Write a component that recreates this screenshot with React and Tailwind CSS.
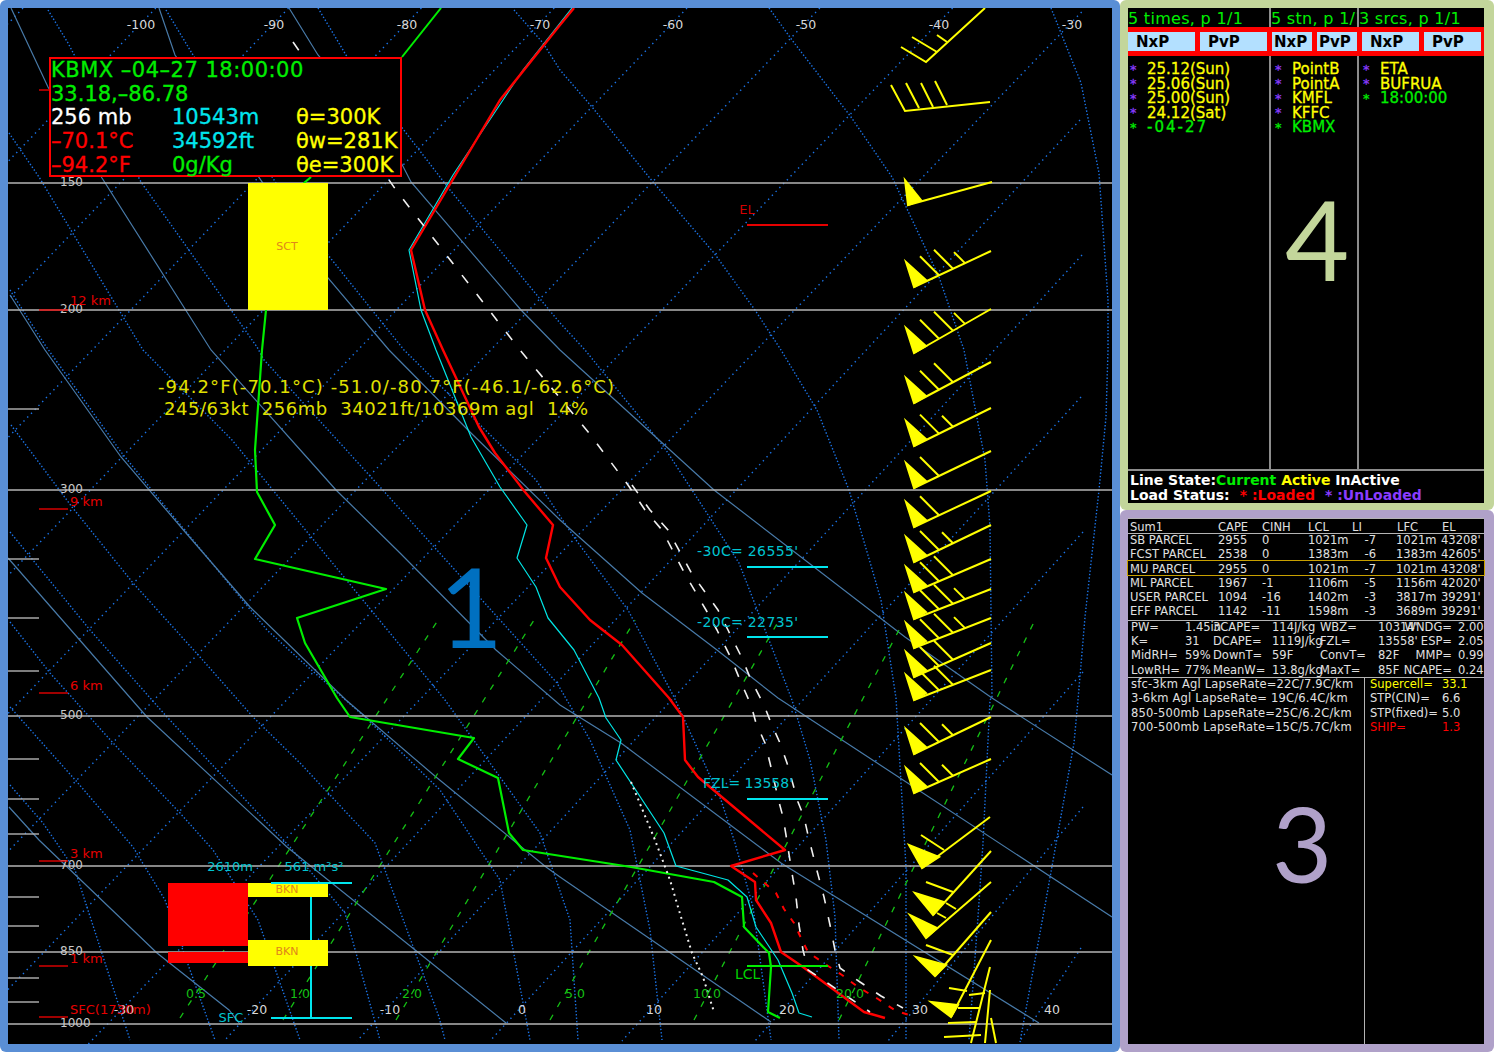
import React from 'react';

const pts = (arr) => arr.map((p) => p.join(',')).join(' ');

// page coordinates, the svg viewBox starts at the panel's inner corner
const isobars = [
  [183, '150'], [310, '200'], [490, '300'], [716, '500'], [866, '700'], [952, '850'], [1024, '1000'],
];
const minorTicks = [409, 559, 618, 671, 759, 799, 834, 897, 926, 978, 1002];

const dryAdiabats = [
  [[11,8],[48,87],[102,178],[211,350],[303,453],[336,490],[400,553],[496,650],[560,705],[621,743],[781,863],[1039,1023]],
  [[159,8],[175,55],[328,278],[389,350],[471,433],[560,520],[642,593],[717,650],[778,698],[1112,917]],
  [[289,8],[318,55],[388,137],[411,182],[521,310],[560,350],[714,490],[905,637],[992,698],[1112,775]],
  [[10,295],[45,350],[121,457],[186,533],[250,607],[346,700],[436,777],[546,867],[560,877],[771,1022]],
  [[8,558],[147,717],[287,847],[506,1023]],
  [[9,807],[39,840],[157,953],[229,1010],[240,1024]],
];

const moistAdiabats = [
  [[1051,8],[1081,83],[1099,173],[1108,300],[1108,350],[1106,417],[1099,490],[1085,617],[1078,700],[1074,743],[1046,900],[1020,1042]],
  [[769,8],[792,40],[851,117],[892,177],[939,277],[964,350],[985,460],[990,527],[992,697],[990,700],[983,843],[978,917],[969,1040]],
  [[514,10],[543,43],[560,70],[592,107],[653,182],[714,253],[755,310],[781,350],[817,410],[849,490],[881,600],[896,698],[906,867],[906,1040]],
  [[318,8],[346,55],[450,190],[560,323],[585,350],[664,447],[692,490],[739,563],[774,653],[792,700],[810,760],[826,840],[835,917],[839,1040]],
  [[166,10],[193,55],[300,220],[404,350],[536,480],[576,540],[628,610],[674,697],[721,800],[735,843],[753,907],[771,1040]],
  [[48,10],[68,43],[141,182],[257,347],[264,360],[371,477],[482,600],[557,683],[590,740],[630,830],[650,930],[662,1040]],
  [[9,133],[39,177],[143,350],[232,440],[330,560],[445,700],[540,833],[570,920],[578,1040]],
  [[10,290],[45,345],[121,452],[160,500],[267,630],[300,660],[365,717],[440,790],[500,880],[530,1040]],
  [[11,425],[72,507],[133,583],[200,657],[253,717],[300,763],[375,843],[439,1017],[445,1040]],
  [[10,532],[90,630],[167,717],[290,847],[345,913],[380,1040]],
  [[10,622],[50,673],[113,743],[180,813],[213,850],[258,920],[300,1040]],
  [[10,707],[77,782],[133,847],[165,900],[215,1040]],
  [[10,785],[43,823],[75,870],[130,1040]],
];

const mixingLines = [
  [[180,1018],[440,617]],
  [[283,1020],[534,620]],
  [[396,1020],[635,620]],
  [[550,1020],[778,622]],
  [[694,1020],[899,630]],
  [[839,1020],[1035,620]],
];

const temperature = [[574,8],[560,25],[500,100],[411,250],[425,310],[443,350],[479,427],[495,453],[525,492],[553,525],[546,558],[560,587],[590,620],[622,645],[669,698],[683,717],[685,760],[698,777],[785,850],[731,866],[755,882],[756,900],[771,923],[781,952],[803,967],[864,1012],[885,1018]];
const wetBulb = [[572,8],[523,70],[453,175],[409,250],[421,310],[436,350],[471,437],[500,487],[527,525],[517,558],[536,587],[548,618],[574,650],[599,698],[606,718],[621,740],[616,760],[664,833],[676,866],[728,880],[747,897],[756,927],[778,960],[792,993],[799,1013],[812,1017]];
const dewpointTop = [[441,8],[402,57]];
const dewpoint = [[311,177],[304,183],[266,310],[262,350],[255,450],[257,492],[275,525],[255,559],[386,589],[297,618],[305,643],[337,698],[350,717],[474,738],[458,759],[498,778],[509,833],[523,850],[631,867],[714,882],[742,897],[744,927],[769,953],[771,967],[768,1012],[780,1018]];

const parcelLeft = [[293,42],[396,190],[520,350],[589,433],[628,485],[645,510],[662,530],[685,574],[706,610],[717,630],[731,658],[740,680],[751,705],[756,723],[765,743],[770,763],[779,802],[783,817],[786,835],[791,867],[796,897],[799,925],[803,950],[808,970],[826,982],[870,1012]];
const parcelRight = [[632,485],[650,510],[668,530],[692,574],[718,610],[728,630],[742,658],[751,680],[764,705],[771,723],[780,743],[787,763],[798,802],[804,817],[808,835],[816,867],[824,897],[830,925],[835,950],[840,968],[860,982],[881,996],[903,1008]];
const parcelDotted = [[631,782],[655,840],[670,880],[681,917],[692,953],[703,977],[714,1012]];
const parcelRed = [[753,873],[776,893],[784,909],[794,923],[801,938],[808,952],[822,962],[842,975],[858,987],[878,999],[896,1011],[913,1016]];

// head y, tail y, feathers (f = full, s = short)
const stdBarbs = [
  [287,251,'ffs'], [353,309,'ffs'], [403,362,'ff'], [446,408,'fs'], [488,451,'f'], [527,491,'f'],
  [562,525,'fs'], [592,559,'ff'], [619,589,'ffs'], [648,618,'ffs'], [677,643,'ff'], [700,670,'ff'],
  [754,717,'fs'], [793,759,'fs'],
];

const barbLines = [
  [[985,8],[926,62],[901,47]], [[937,52],[912,37]], [[947,42],[937,35]],
  [[990,102],[905,111],[891,85]], [[919,108],[906,83]], [[933,107],[921,83]], [[947,105],[935,81]],
  [[992,182],[908,205]],
  [[990,817],[922,868]], [[944,850],[921,835]],
  [[991,851],[933,915]], [[953,892],[926,882]], [[956,909],[946,903]],
  [[991,882],[926,938]], [[946,918],[937,913]],
  [[991,912],[935,976]], [[953,955],[926,945]],
  [[991,940],[951,1017]], [[949,988],[967,991]],
  [[990,967],[971,1043]], [[985,993],[969,995]], [[980,1008],[958,1008]], [[976,1022],[948,1023]], [[981,1035],[944,1037]],
  [[990,990],[985,1043]], [[991,1018],[996,1043]],
];
const barbTris = [
  [[905,180],[908,205],[921,200]],
  [[909,845],[922,868],[939,857]],
  [[915,893],[933,915],[944,902]],
  [[910,915],[926,938],[937,928]],
  [[916,957],[935,976],[946,965]],
  [[931,1002],[951,1017],[958,1005]],
];

const topTemps = [[141,'-100'],[274,'-90'],[407,'-80'],[540,'-70'],[673,'-60'],[806,'-50'],[939,'-40'],[1072,'-30']];
const bottomTemps = [[124,'-30'],[257,'-20'],[390,'-10'],[522,'0'],[654,'10'],[787,'20'],[920,'30'],[1052,'40']];
const mixLabels = [[196,'0.5'],[300,'1.0'],[412,'2.0'],[575,'5.0'],[707,'10.0'],[850,'20.0']];
const heights = [[300,310,'12 km'],[501,509,'9 km'],[685,693,'6 km'],[853,861,'3 km'],[958,966,'1 km'],[1009,1017,'SFC(1730m)']];

// cold isotherms run straight off the top, the warm ones stop at the right edge of the grid
const isotherms = [];
for (let t = -130; t <= -30; t += 10) {
  const x24 = 1070 + (t + 30) * 13.28;
  isotherms.push([x24 + 16 * 0.9624, 8, x24 - 1036 * 0.9624, 1060]);
}
isotherms.push(
  [1080, 120, 224, 1041], [1082, 255, 357, 1041], [1081, 397, 490, 1041], [1083, 532, 622, 1041],
  [1083, 672, 755, 1041], [1083, 807, 888, 1041], [1081, 948, 1020, 1041],
);

function Label({ x, y, fill = '#d8d8d8', size = 12, anchor = 'middle', width, children }) {
  return (
    <text x={x} y={y} fill={fill} fontSize={size} textAnchor={anchor} dominantBaseline="central" textLength={width} className="whitespace-pre">
      {children}
    </text>
  );
}

function Barb({ h, e, feathers }) {
  const staffAt = (x) => h + ((x - 914) / 77) * (e - h);
  const xs = [939, 953, 965];
  return (
    <g>
      <line x1={914} y1={h} x2={991} y2={e} />
      <polygon points={`906,${h - 25} 914,${h} 926,${h - 7}`} fill="#ffff00" />
      {feathers.split('').map((f, i) => {
        const d = f === 'f' ? 19 : 11;
        const y = staffAt(xs[i]);
        return <line key={i} x1={xs[i]} y1={y} x2={xs[i] - d} y2={y - d} />;
      })}
    </g>
  );
}

function SkewT() {
  return (
    <svg
      viewBox="8 8 1104 1036"
      className="block w-[1104px] h-[1036px] bg-black font-['DejaVu_Sans',sans-serif]"
    >
      <defs>
        <clipPath id="plot">
          <rect x="8" y="8" width="1076" height="1036" />
        </clipPath>
      </defs>

      {/* isotherms */}
      <g clipPath="url(#plot)" stroke="#1b74e8" strokeWidth="1.4" strokeDasharray="1.4 4">
        {isotherms.map((l, i) => (
          <line key={i} x1={l[0]} y1={l[1]} x2={l[2]} y2={l[3]} />
        ))}
      </g>

      {/* moist adiabats */}
      <g fill="none" stroke="#1b74e8" strokeWidth="1.4" strokeDasharray="1.4 2">
        {moistAdiabats.map((p, i) => (
          <polyline key={i} points={pts(p)} />
        ))}
      </g>

      {/* dry adiabats */}
      <g fill="none" stroke="#487aa8" strokeWidth="1.2">
        {dryAdiabats.map((p, i) => (
          <polyline key={i} points={pts(p)} />
        ))}
      </g>

      {/* mixing ratio */}
      <g stroke="#14c014" strokeWidth="1.3" strokeDasharray="6 9">
        {mixingLines.map((p, i) => (
          <line key={i} x1={p[0][0]} y1={p[0][1]} x2={p[1][0]} y2={p[1][1]} />
        ))}
      </g>

      {/* pressure lines */}
      <g stroke="#b4b4b4" strokeWidth="1.4">
        {isobars.map(([y]) => (
          <line key={y} x1="8" y1={y} x2="1112" y2={y} />
        ))}
        {minorTicks.map((y) => (
          <line key={y} x1="8" y1={y} x2="39" y2={y} />
        ))}
      </g>

      {/* profiles */}
      <g fill="none" strokeLinejoin="round">
        <polyline points={pts(wetBulb)} stroke="#00e5e5" strokeWidth="1.2" />
        <polyline points={pts(temperature)} stroke="#ff0000" strokeWidth="2.4" />
        <polyline points={pts(dewpointTop)} stroke="#00ee00" strokeWidth="2" />
        <polyline points={pts(dewpoint)} stroke="#00ee00" strokeWidth="2.2" />
        <polyline points={pts(parcelLeft)} stroke="#f0f0f0" strokeWidth="1.6" strokeDasharray="10 14" />
        <polyline points={pts(parcelRight)} stroke="#f0f0f0" strokeWidth="1.6" strokeDasharray="10 14" />
        <polyline points={pts(parcelDotted)} stroke="#f0f0f0" strokeWidth="2" strokeDasharray="2 4" />
        <polyline points={pts(parcelRed)} stroke="#ff0000" strokeWidth="2" strokeDasharray="6 9" />
      </g>

      {/* cloud boxes */}
      <rect x="248" y="183" width="80" height="127" fill="#ffff00" />
      <rect x="168" y="883" width="80" height="63" fill="#ff0000" />
      <rect x="168" y="952" width="80" height="11" fill="#ff0000" />
      <rect x="248" y="883" width="80" height="14" fill="#ffff00" />
      <rect x="248" y="940" width="80" height="26" fill="#ffff00" />
      <Label x={287} y={246} fill="#e0861a" size={11}>SCT</Label>
      <Label x={287} y={889} fill="#e0861a" size={11}>BKN</Label>
      <Label x={287} y={951} fill="#e0861a" size={11}>BKN</Label>

      {/* storm layer */}
      <g stroke="#00e5ee" strokeWidth="2">
        <line x1="271" y1="883" x2="352" y2="883" />
        <line x1="311" y1="897" x2="311" y2="940" />
        <line x1="311" y1="966" x2="311" y2="1018" />
        <line x1="271" y1="1018" x2="352" y2="1018" />
      </g>
      <Label x={230} y={866} fill="#00c4d0" size={13}>2610m</Label>
      <Label x={314} y={866} fill="#00c4d0" size={13}>561 m²s²</Label>
      <Label x={231} y={1017} fill="#00c4d0" size={13}>SFC</Label>

      {/* level markers */}
      <g strokeWidth="2">
        <line x1="747" y1="225" x2="828" y2="225" stroke="#e60000" />
        <line x1="747" y1="567" x2="828" y2="567" stroke="#00e5ee" />
        <line x1="747" y1="637" x2="828" y2="637" stroke="#00e5ee" />
        <line x1="747" y1="799" x2="828" y2="799" stroke="#00e5ee" />
        <line x1="747" y1="966" x2="828" y2="966" stroke="#00ee00" />
      </g>
      <Label x={747} y={209} fill="#d40000" size={13}>EL</Label>
      <Label x={697} y={551} fill="#00c4d0" size={14} anchor="start" width={101}>-30C= 26555'</Label>
      <Label x={697} y={622} fill="#00c4d0" size={14} anchor="start" width={101}>-20C= 22735'</Label>
      <Label x={703} y={783} fill="#00c4d0" size={14} anchor="start">FZL= 13558'</Label>
      <Label x={735} y={974} fill="#00d000" size={14} anchor="start">LCL</Label>

      {/* wind barbs */}
      <g stroke="#ffff00" strokeWidth="2" fill="none">
        {stdBarbs.map(([h, e, f]) => (
          <Barb key={h} h={h} e={e} feathers={f} />
        ))}
        {barbLines.map((p, i) => (
          <polyline key={i} points={pts(p)} />
        ))}
        {barbTris.map((p, i) => (
          <polygon key={i} points={pts(p)} fill="#ffff00" />
        ))}
      </g>

      {/* axis labels */}
      {topTemps.map(([x, t]) => (
        <Label key={t} x={x} y={24} size={12.5}>{t}</Label>
      ))}
      {bottomTemps.map(([x, t]) => (
        <Label key={t} x={x} y={1009} size={12.5}>{t}</Label>
      ))}
      {mixLabels.map(([x, t]) => (
        <Label key={t} x={x} y={993} fill="#14c014" size={12.5}>{t}</Label>
      ))}
      {isobars.map(([y, p]) => (
        <Label key={p} x={60} y={y - 1} anchor="start" fill="#c8c8c8">{p}</Label>
      ))}

      {/* height scale */}
      <line x1="39" y1="90" x2="49" y2="90" stroke="#e60000" strokeWidth="1.4" />
      {heights.map(([ty, ly, h]) => (
        <g key={h}>
          <line x1="39" y1={ly} x2="68" y2={ly} stroke="#e60000" strokeWidth="1.4" />
          <Label x={70} y={ty} fill="#e60000" size={13} anchor="start">{h}</Label>
        </g>
      ))}

      {/* sampling readout */}
      <Label x={158} y={386} fill="#e0e000" size={18} anchor="start" width={456}>-94.2°F(-70.1°C) -51.0/-80.7°F(-46.1/-62.6°C)</Label>
      <Label x={164} y={408} fill="#e0e000" size={18} anchor="start" width={424}>245/63kt  256mb  34021ft/10369m agl  14%</Label>

      <text x={471} y={648} fill="#0070c0" fontSize="111" textAnchor="middle" className="font-['Lato',sans-serif]">1</text>
    </svg>
  );
}

function Readout() {
  const rows = [
    ['256 mb', 'text-white', '10543m', 'text-[#00e5ee]', 'θ=300K', 'text-[#ffff00]'],
    ['–70.1°C', 'text-[#ff0000]', '34592ft', 'text-[#00e5ee]', 'θw=281K', 'text-[#ffff00]'],
    ['–94.2°F', 'text-[#ff0000]', '0g/Kg', 'text-[#00ee00]', 'θe=300K', 'text-[#ffff00]'],
  ];
  return (
    <div className="absolute left-[49px] top-[57px] w-[353px] h-[120px] bg-black border-2 border-[#ff0000] font-['DejaVu_Sans',sans-serif] text-[21px] leading-[23.7px] whitespace-nowrap [-webkit-text-stroke:0.3px_currentColor]">
      <div className="text-[#00ee00] tracking-[0.5px]">KBMX –04–27 18:00:00</div>
      <div className="text-[#00ee00]">33.18,–86.78</div>
      {rows.map((r) => (
        <div key={r[0]} className="grid grid-cols-[121px_124px_1fr]">
          <span className={r[1]}>{r[0]}</span>
          <span className={r[3]}>{r[2]}</span>
          <span className={r[5]}>{r[4]}</span>
        </div>
      ))}
    </div>
  );
}

function ListColumn({ width, title, strip, btnW, btnText, items, textPad }) {
  return (
    <div className={`${width} h-full shrink-0 flex flex-col border-r-2 border-[#8c8c8c] last:border-r-0`}>
      <div className="h-[19px] overflow-hidden text-[#00ee00] text-[16px] leading-[22px] tracking-[0.3px] whitespace-nowrap">{title}</div>
      <div className={`h-[29px] bg-[#ff0000] flex items-center gap-[5px] ${strip}`}>
        <span className={`${btnW} ${btnText} h-[19px] bg-[#b3e0ff] text-black font-bold text-[15px] leading-[20px]`}>NxP</span>
        <span className={`${btnW} ${btnText} h-[19px] bg-[#b3e0ff] text-black font-bold text-[15px] leading-[20px]`}>PvP</span>
      </div>
      <div className="pt-[6px]">
        {items.map(([text, current, wide]) => (
          <div key={text} className={`flex h-[14.5px] items-center whitespace-nowrap text-[15px] [-webkit-text-stroke:0.3px_currentColor] ${textPad}`}>
            <span className={`w-[17px] shrink-0 text-[13px] ${current ? 'text-[#00ee00]' : 'text-[#8a3cff]'}`}>*</span>
            <span className={`${current ? 'text-[#00ee00]' : 'text-[#ffff00]'} ${wide ? 'tracking-[2px]' : ''}`}>{text}</span>
          </div>
        ))}
      </div>
    </div>
  );
}

function LoadPanel() {
  return (
    <div className="relative h-[510px] bg-[#c3d69b] rounded-md pt-2 pl-2 pr-[10px] pb-[7px]">
      <div className="h-full bg-black flex flex-col font-['DejaVu_Sans',sans-serif]">
        <div className="h-[463px] flex border-b-2 border-[#8c8c8c]">
          <ListColumn
            width="w-[143px]"
            title="5 times, p 1/1"
            strip="-mr-[2px]"
            btnW="w-[67px]"
            btnText="pl-[8px]"
            textPad="pl-[2px]"
            items={[['25.12(Sun)'], ['25.06(Sun)'], ['25.00(Sun)'], ['24.12(Sat)'], ['-04-27', true, true]]}
          />
          <ListColumn
            width="w-[88px]"
            title="5 stn, p 1/1"
            strip="-mr-[2px] pl-[1px]"
            btnW="w-[40px]"
            btnText="pl-[2px]"
            textPad="pl-[4px]"
            items={[['PointB'], ['PointA'], ['KMFL'], ['KFFC'], ['KBMX', true]]}
          />
          <ListColumn
            width="w-[125px]"
            title="3 srcs, p 1/1"
            strip="pl-[3px]"
            btnW="w-[57px]"
            btnText="pl-[8px]"
            textPad="pl-[4px]"
            items={[['ETA'], ['BUFRUA'], ['18:00:00', true]]}
          />
        </div>
        <div className="px-[2px] text-[14px] leading-[15px] font-bold text-white whitespace-nowrap pt-[2px]">
          <div>
            Line State:<span className="text-[#00ee00]">Current</span>{' '}
            <span className="text-[#ffff00]">Active</span> InActive
          </div>
          <div>
            Load Status:
            <span className="text-[#ff0000] ml-[10px]">* :Loaded</span>
            <span className="text-[#8a3cff] ml-[10px]">* :UnLoaded</span>
          </div>
        </div>
      </div>
      <div className="absolute left-[165px] top-[163px] text-[#c3d69b] text-[111px] leading-[150px] font-['Lato',sans-serif]">4</div>
    </div>
  );
}

const parcels = [
  ['SB PARCEL', '2955', '0', '1021m', '-7', '1021m', "43208'"],
  ['FCST PARCEL', '2538', '0', '1383m', '-6', '1383m', "42605'"],
  ['MU PARCEL', '2955', '0', '1021m', '-7', '1021m', "43208'"],
  ['ML PARCEL', '1967', '-1', '1106m', '-5', '1156m', "42020'"],
  ['USER PARCEL', '1094', '-16', '1402m', '-3', '3817m', "39291'"],
  ['EFF PARCEL', '1142', '-11', '1598m', '-3', '3689m', "39291'"],
];
const indices = [
  ['PW=', '1.45in', '3CAPE=', '114J/kg', 'WBZ=', "10314'", 'WNDG=', '2.00'],
  ['K=', '31', 'DCAPE=', '1119J/kg', 'FZL=', "13558'", 'ESP=', '2.05'],
  ['MidRH=', '59%', 'DownT=', '59F', 'ConvT=', '82F', 'MMP=', '0.99'],
  ['LowRH=', '77%', 'MeanW=', '13.8g/kg', 'MaxT=', '85F', 'NCAPE=', '0.24'],
];
const lapse = [
  'sfc-3km Agl LapseRate=22C/7.9C/km',
  '3-6km Agl LapseRate= 19C/6.4C/km',
  '850-500mb LapseRate=25C/6.2C/km',
  '700-500mb LapseRate=15C/5.7C/km',
];
const severe = [
  ['Supercell=', '33.1', 'text-[#ffff00]'],
  ['STP(CIN)=', '6.6', 'text-[#e0e0e0]'],
  ['STP(fixed)=', '5.0', 'text-[#e0e0e0]'],
  ['SHIP=', '1.3', 'text-[#ff0000]'],
];

function SummaryPanel() {
  const parcelCols = 'grid grid-cols-[88px_44px_46px_50px_34px_47px_1fr] h-[14.3px] items-center pl-[2px] whitespace-nowrap';
  return (
    <div className="relative h-[542px] bg-[#b0a1c9] rounded-md pt-2 pl-2 pr-[10px] pb-2">
      <div className="h-full bg-black flex flex-col font-['DejaVu_Sans',sans-serif] text-[11.5px] text-[#e0e0e0]">
        <div className="h-[16px] border-y-[1.5px] border-[#b4b4b4] grid grid-cols-[88px_44px_46px_44px_45px_45px_1fr] items-center pl-[2px]">
          <span>Sum1</span><span>CAPE</span><span>CINH</span><span>LCL</span><span>LI</span><span>LFC</span><span>EL</span>
        </div>
        <div className="h-[86px] -mt-[2px] mb-[2px]">
          {parcels.map((p) => (
            <div key={p[0]} className={`${parcelCols} ${p[0] === 'MU PARCEL' ? 'outline-[1.5px] outline-[#c8a000]' : ''}`}>
              <span>{p[0]}</span><span>{p[1]}</span><span>{p[2]}</span><span>{p[3]}</span>
              <span className="text-right pr-[16px]">{p[4]}</span><span className="pl-[4px]">{p[5]}</span><span className="pl-[2px]">{p[6]}</span>
            </div>
          ))}
        </div>
        <div className="h-[58px] border-y-[1.5px] border-[#b4b4b4]">
          <div className="-mt-[2.5px]">
            {indices.map((r) => (
              <div key={r[0]} className="grid grid-cols-[54px_28px_59px_48px_58px_22px_58px_1fr] h-[14.4px] items-center pl-[3px] whitespace-nowrap">
                {r.map((c, i) => (
                  <span key={i} className={i === 6 ? 'text-right pr-[6px]' : ''}>{c}</span>
                ))}
              </div>
            ))}
          </div>
        </div>
        <div className="flex-1 flex">
          <div className="w-[237px] border-r-[1.5px] border-[#b4b4b4] pl-[3px] whitespace-nowrap tracking-[0.2px]">
            {lapse.map((l) => (
              <div key={l} className="h-[14.3px] leading-[12.5px]">{l}</div>
            ))}
          </div>
          <div className="flex-1 pl-[5px] whitespace-nowrap">
            {severe.map(([k, v, c]) => (
              <div key={k} className={`grid grid-cols-[72px_1fr] h-[14.3px] leading-[12.5px] ${c}`}>
                <span>{k}</span><span>{v}</span>
              </div>
            ))}
          </div>
        </div>
      </div>
      <div className="absolute left-[152px] top-[258px] text-[#b0a1c9] text-[104px] leading-[150px] font-['Lato',sans-serif]">3</div>
    </div>
  );
}

export default function App() {
  return (
    <div className="w-[1494px] h-[1052px] flex bg-white overflow-hidden">
      <div className="relative w-[1120px] h-full bg-[#5a8fd6] rounded-md pt-2 pl-2">
        <SkewT />
        <Readout />
      </div>
      <div className="w-[374px] h-full flex flex-col">
        <LoadPanel />
        <SummaryPanel />
      </div>
    </div>
  );
}
